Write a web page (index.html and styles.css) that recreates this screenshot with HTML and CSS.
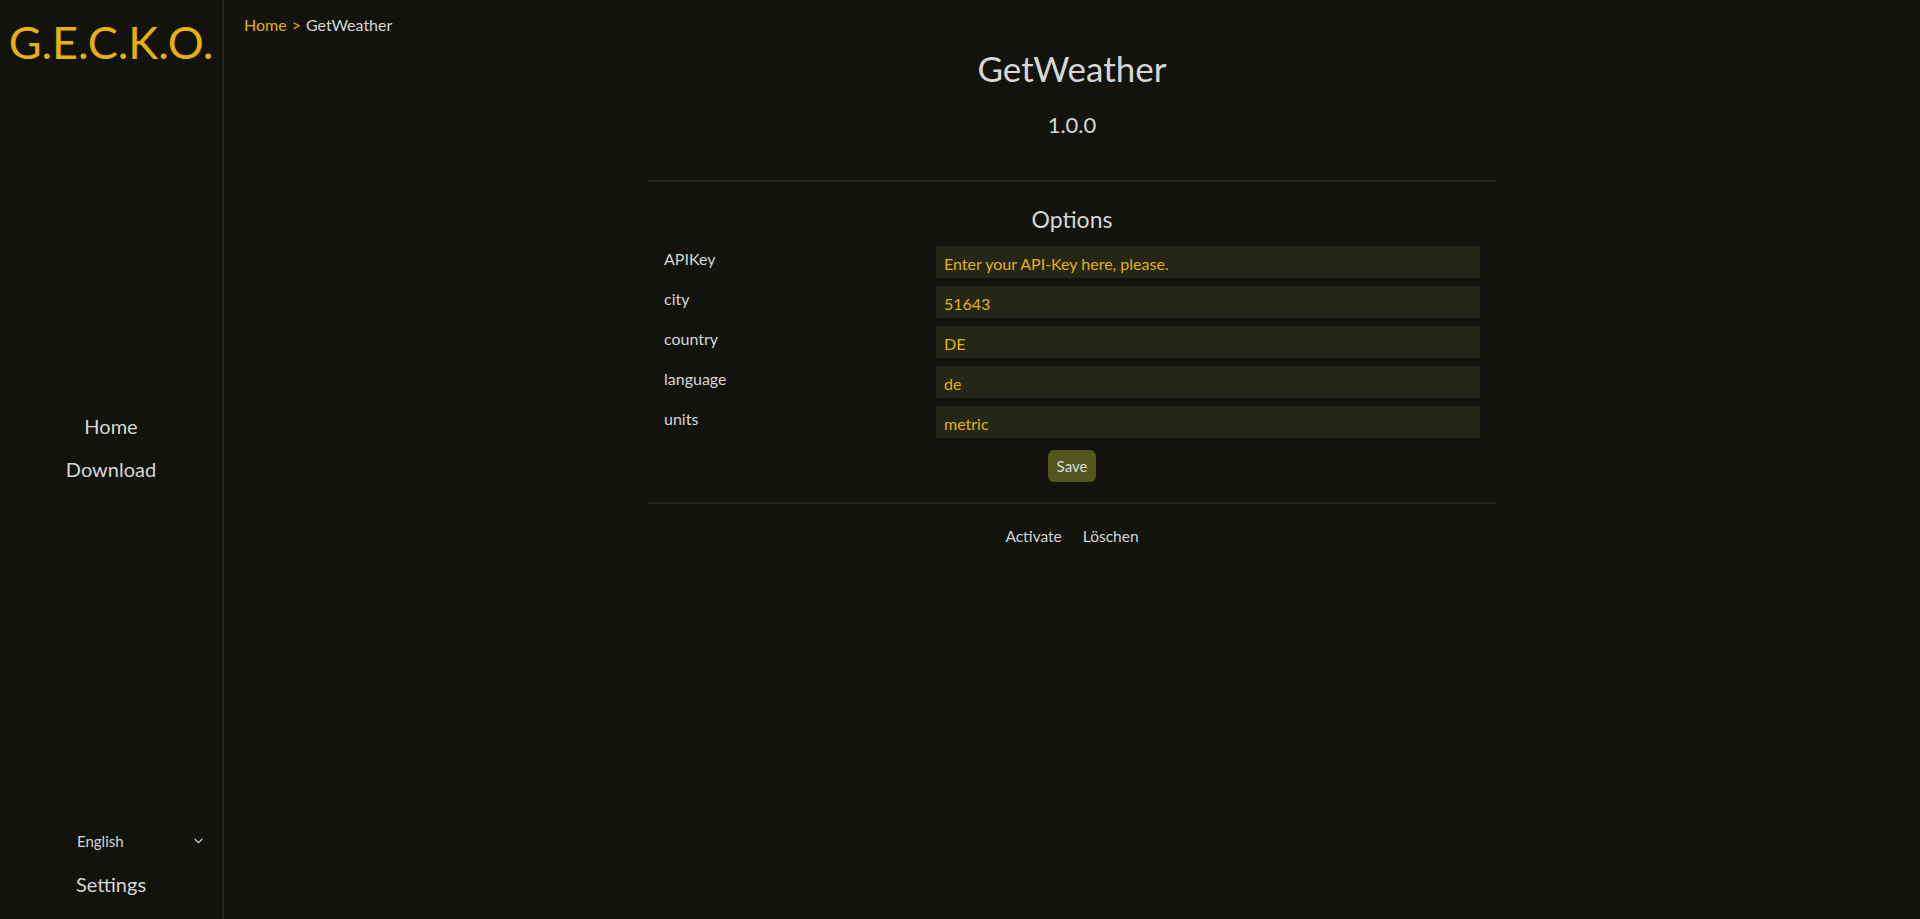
FILE: index.html
```html
<!DOCTYPE html>
<html lang="en">
<head>
<meta charset="utf-8">
<title>GetWeather - G.E.C.K.O.</title>
<link rel="stylesheet" href="styles.css">
</head>
<body>
<div class="app">
  <aside class="sidebar">
    <div class="logo">G.E.C.K.O.</div>
    <nav class="nav">
      <a class="nav-link" href="#">Home</a>
      <a class="nav-link" href="#">Download</a>
    </nav>
    <div class="sidebar-bottom">
      <div class="lang-select">
        <span>English</span>
        <svg class="chevron" width="9" height="6" viewBox="0 0 9 6"><path d="M0.8 1 L4.5 4.7 L8.2 1" fill="none" stroke="#d6d6d6" stroke-width="1.2"/></svg>
      </div>
      <a class="nav-link" href="#">Settings</a>
    </div>
  </aside>
  <main class="main">
    <div class="breadcrumb"><a class="crumb-link" href="#">Home</a><span class="crumb-sep">&gt;</span><span class="crumb-current">GetWeather</span></div>
    <div class="content">
      <h1 class="title">GetWeather</h1>
      <div class="version">1.0.0</div>
      <hr class="divider">
      <h2 class="section-title">Options</h2>
      <form class="options">
        <label class="opt-label">APIKey</label>
        <input class="opt-input" type="text" value="Enter your API-Key here, please.">
        <label class="opt-label">city</label>
        <input class="opt-input" type="text" value="51643">
        <label class="opt-label">country</label>
        <input class="opt-input" type="text" value="DE">
        <label class="opt-label">language</label>
        <input class="opt-input" type="text" value="de">
        <label class="opt-label">units</label>
        <input class="opt-input" type="text" value="metric">
      </form>
      <div class="save-row"><button class="save-btn" type="button">Save</button></div>
      <hr class="divider">
      <div class="actions">
        <a class="action" href="#">Activate</a>
        <a class="action" href="#">Löschen</a>
      </div>
    </div>
  </main>
</div>
</body>
</html>
```
FILE: styles.css
```css
html, body {
  margin: 0;
  padding: 0;
  height: 100%;
}
body {
  background: #12130c;
  color: #d6d6d6;
  font-family: Lato, "Open Sans", sans-serif;
}
a {
  text-decoration: none;
  color: inherit;
}
.app {
  display: flex;
  height: 919px;
}
.sidebar {
  width: 222px;
  flex: none;
  border-right: 2px solid #25271a;
  display: flex;
  flex-direction: column;
}
.logo {
  margin-top: 13px;
  height: 58px;
  line-height: 58px;
  font-size: 45px;
  color: #e7b00c;
  text-align: center;
  white-space: nowrap;
}
.nav {
  flex: 1;
  display: flex;
  flex-direction: column;
  justify-content: center;
  align-items: center;
}
.nav-link {
  font-size: 20px;
  line-height: 43px;
  color: #d6d6d6;
  text-align: center;
}
.sidebar-bottom {
  display: flex;
  flex-direction: column;
  align-items: center;
  padding-bottom: 13px;
}
.lang-select {
  align-self: flex-start;
  margin-left: 77px;
  width: 126px;
  height: 32px;
  line-height: 32px;
  margin-bottom: 6px;
  font-size: 15px;
  display: flex;
  justify-content: space-between;
  align-items: center;
}
.chevron {
  display: block;
}
.main {
  flex: 1;
  min-width: 0;
}
.breadcrumb {
  padding: 14px 0 0 20px;
  font-size: 16px;
  line-height: 22px;
}
.crumb-link {
  color: #e7b00c;
}
.crumb-sep {
  color: #e7b00c;
  margin: 0 5px;
}
.crumb-current {
  color: #d6d6d6;
}
.content {
  width: 848px;
  margin: 0 auto;
  text-align: center;
}
.title {
  margin: 10px 0 0;
  font-size: 35px;
  line-height: 44px;
  font-weight: 400;
}
.version {
  margin-top: 20px;
  font-size: 22px;
  line-height: 30px;
}
.divider {
  margin: 40px 0 0;
  border: 0;
  height: 2px;
  background: #25271a;
}
.section-title {
  margin: 22px 0 0;
  font-size: 23px;
  line-height: 30px;
  font-weight: 400;
}
.options {
  margin-top: 12px;
  padding: 0 16px;
  display: grid;
  grid-template-columns: 272px 544px;
  row-gap: 8px;
  text-align: left;
}
.opt-label {
  font-size: 16px;
  line-height: 22px;
  padding-top: 2px;
  color: #d6d6d6;
}
.opt-input {
  box-sizing: border-box;
  height: 32px;
  margin: 0;
  border: 0;
  outline: 0;
  padding: 2px 8px 0;
  background: #242617;
  color: #e7b00c;
  font-family: Lato, "Open Sans", sans-serif;
  font-size: 16px;
}
.save-row {
  margin-top: 12px;
  display: flex;
  justify-content: center;
}
.save-btn {
  width: 48px;
  height: 32px;
  padding: 0;
  border: 0;
  border-radius: 6px;
  background: #53561f;
  color: #dcdcdc;
  font-family: Lato, "Open Sans", sans-serif;
  font-size: 15px;
}
.save-row + .divider {
  margin-top: 20px;
}
.actions {
  margin-top: 22px;
  display: flex;
  justify-content: center;
  gap: 21px;
  font-size: 15.5px;
  line-height: 20px;
}
.action {
  color: #d6d6d6;
}
```
